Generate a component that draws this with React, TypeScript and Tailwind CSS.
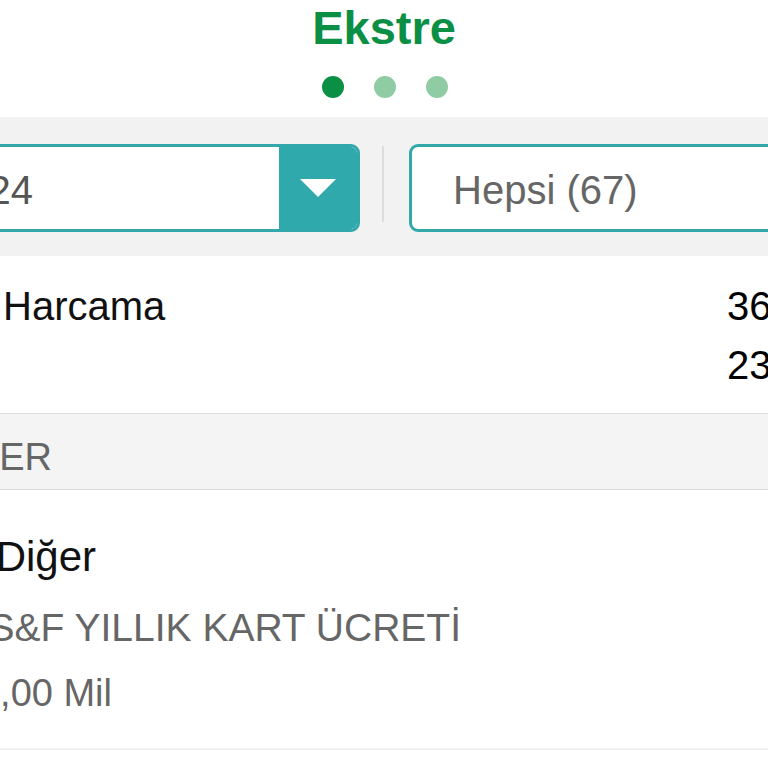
import React from 'react';

const font = { fontFamily: '"Liberation Sans", Arial, sans-serif' };

function Clipped({ width, children, className = '' }: { width: string; children: React.ReactNode; className?: string }) {
  // text right-aligned to a fixed edge, overflowing off the left side
  return <div className={`${width} shrink-0 flex justify-end whitespace-nowrap ${className}`}>{children}</div>;
}

export default function App() {
  return (
    <div className="w-[768px] h-[768px] overflow-hidden bg-white" style={font}>
      {/* header */}
      <div className="h-[117px] flex flex-col items-center">
        <h1 className="text-[47px] leading-[56px] font-bold text-[#0b8f45]">Ekstre</h1>
        <div className="flex gap-[30px] mt-[20px] ml-[2px]">
          <span className="w-[22px] h-[22px] rounded-full bg-[#0b8f45]" />
          <span className="w-[22px] h-[22px] rounded-full bg-[#8fcca3]" />
          <span className="w-[22px] h-[22px] rounded-full bg-[#8fcca3]" />
        </div>
      </div>

      {/* filters */}
      <div className="h-[139px] bg-[#f2f2f3] flex items-start pt-[27px]">
        <div className="-ml-[60px] w-[420px] h-[88px] shrink-0 border-[3px] border-[#33a8ab] rounded-[9px] bg-white flex overflow-hidden">
          <div className="flex-1 flex items-center pt-[4px]">
            <Clipped width="w-[90px]" className="text-[40px] text-[#555]">Ocak 2024</Clipped>
          </div>
          <div className="w-[78px] bg-[#30a9ac] flex items-center justify-center">
            <svg width="36" height="18" viewBox="0 0 36 18">
              <polygon points="0,0 36,0 18,18" fill="#fff" />
            </svg>
          </div>
        </div>
        <div className="ml-[22px] mt-[2px] w-[2px] h-[76px] bg-[#dcdcdc] shrink-0" />
        <div className="ml-[25px] w-[400px] h-[88px] shrink-0 border-[3px] border-[#33a8ab] rounded-[9px] bg-white flex items-center pl-[41px] pt-[4px]">
          <span className="text-[40px] text-[#666] whitespace-nowrap">Hepsi (67)</span>
        </div>
      </div>

      {/* summary */}
      <div className="h-[158px] pt-[20px] border-b border-[#dcdcdc]">
        <div className="h-[59px] flex items-center">
          <div className="flex-1 pl-[3px] text-[40px] text-[#111] whitespace-nowrap">Harcama</div>
          <div className="w-[41px] shrink-0 text-[40px] text-black whitespace-nowrap">36.412,50 TL</div>
        </div>
        <div className="h-[59px] flex items-center">
          <div className="flex-1" />
          <div className="w-[41px] shrink-0 text-[40px] text-black whitespace-nowrap">23.180,75 TL</div>
        </div>
      </div>

      {/* section header */}
      <div className="h-[76px] bg-[#f4f4f4] border-b border-[#dcdcdc] pt-[21px]">
        <div className="flex leading-[44px]">
          <Clipped width="w-[52px]" className="text-[38px] text-[#666]">İŞLEMLER</Clipped>
        </div>
      </div>

      {/* item */}
      <div className="pt-[40px] pb-[28px] border-b-2 border-[#f0f0f0]">
        <div className="flex leading-[54px]">
          <Clipped width="w-[96px]" className="text-[42px] text-[#111]">Diğer</Clipped>
        </div>
        <div className="flex leading-[54px] mt-[17px]">
          <Clipped width="w-[461px]" className="text-[39px] text-[#666]">SHOPS&amp;F YILLIK KART ÜCRETİ</Clipped>
        </div>
        <div className="flex leading-[54px] mt-[11px]">
          <Clipped width="w-[112px]" className="text-[38px] text-[#666]">120,00 Mil</Clipped>
        </div>
      </div>
    </div>
  );
}
